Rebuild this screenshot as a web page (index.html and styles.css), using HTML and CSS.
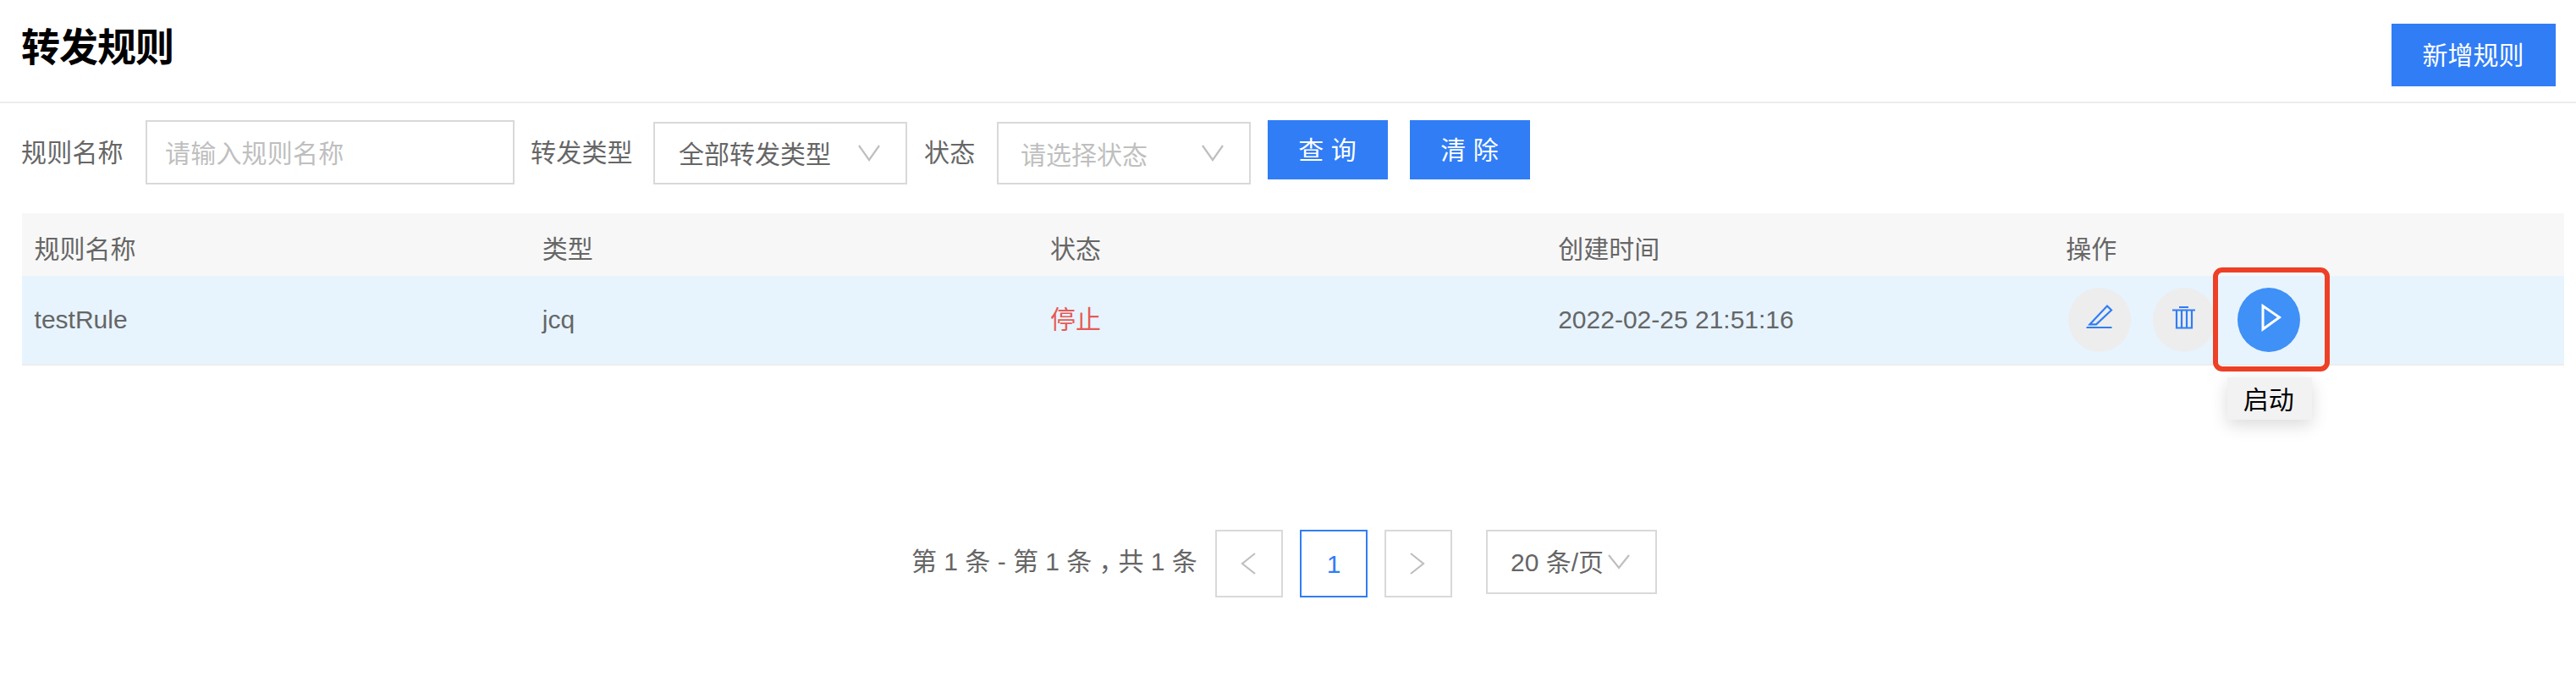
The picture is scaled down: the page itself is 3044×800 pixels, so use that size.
FILE: index.html
```html
<!DOCTYPE html>
<html lang="zh-CN">
<head>
<meta charset="utf-8">
<title>转发规则</title>
<link rel="stylesheet" href="styles.css">
</head>
<body>
<header class="header">
  <h1 class="title">转发规则</h1>
  <button class="btn btn-add"><span>新增规则</span></button>
</header>
<form class="filters">
  <label class="label">规则名称</label>
  <div class="field field-input"><span>请输入规则名称</span></div>
  <label class="label label-type">转发类型</label>
  <div class="field field-select"><span>全部转发类型</span>
    <svg class="chevron" viewBox="0 0 26 20"><path d="M1 1l12 17L25 1"/></svg></div>
  <label class="label label-state">状态</label>
  <div class="field field-select empty"><span>请选择状态</span>
    <svg class="chevron" viewBox="0 0 26 20"><path d="M1 1l12 17L25 1"/></svg></div>
  <button type="button" class="btn btn-query"><span>查 询</span></button>
  <button type="button" class="btn btn-clear"><span>清 除</span></button>
</form>
<main class="table">
  <div class="row head">
    <div>规则名称</div><div>类型</div><div>状态</div><div>创建时间</div><div>操作</div>
  </div>
  <div class="row data">
    <div>testRule</div><div>jcq</div><div class="stopped">停止</div><div>2022-02-25 21:51:16</div>
    <div class="actions">
      <a class="action"><svg viewBox="0 0 74 76"><path d="M21.500 47h30M25.500 43.300L46 21.500l5 5L33 43.300z"/></svg></a>
      <a class="action"><svg viewBox="0 0 74 76"><path d="M31 23h11M23 26.500h27M28 27v20.500h18V27M34 27v20M40 27v20"/></svg></a>
      <a class="action active"><svg viewBox="0 0 74 76"><path d="M30 21.500v27.500l19.500-14z"/></svg>
        <span class="highlight"></span><span class="tooltip">启动</span></a>
    </div>
  </div>
</main>
<nav class="pagination">
  <span class="total">第 1 条 - 第 1 条<span class="comma">，</span>共 1 条</span>
  <a class="page"><svg class="arrow" viewBox="0 0 18 26"><path d="M17 1L2 13l15 12"/></svg></a>
  <a class="page current"><span>1</span></a>
  <a class="page"><svg class="arrow" viewBox="0 0 18 26"><path d="M1 1l15 12L1 25"/></svg></a>
  <div class="size"><span>20 条/页</span><svg class="size-chevron" viewBox="0 0 26 18"><path d="M1 1l12 15L25 1"/></svg></div>
</nav>
</body>
</html>
```
FILE: styles.css
```css
* { box-sizing: border-box; }
body {
  margin: 0;
  background: #fff;
  color: #666;
  font: 30px/44px "Liberation Sans", "Noto Sans CJK SC", sans-serif;
}
svg { fill: none; stroke: #bfbfbf; stroke-width: 2.2; display: block; }
.header {
  display: flex;
  justify-content: space-between;
  align-items: flex-start;
  height: 122px;
  padding: 28px 24px 0 25px;
  border-bottom: 2px solid #ededed;
}
.title {
  margin: 0;
  padding-top: 2px;
  color: #000;
  font-size: 46px;
  line-height: 52px;
  letter-spacing: -1px;
}
.btn {
  display: flex;
  align-items: center;
  justify-content: center;
  width: 142px;
  height: 70px;
  padding: 2px 1px 0 0;
  border: 0;
  background: #307df6;
  color: #fff;
  font: inherit;
}
.btn-add { width: 194px; height: 74px; padding-right: 1px; }
.btn-clear { margin-left: 26px; }
.btn-query { margin-left: 20px; }
.filters { display: flex; height: 130px; padding: 20px 0 0 25px; }
.label { width: 147px; padding-top: 17px; letter-spacing: .2px; }
.label-type { margin-left: 19px; width: 145px; }
.label-state { margin-left: 20px; width: 86px; }
.field {
  display: flex;
  align-items: center;
  border: 2px solid #d9d9d9;
}
.field span { padding-top: 4px; }
.field-input { width: 436px; height: 76px; padding-left: 21px; color: #bfbfbf; letter-spacing: .2px; }
.field-select {
  justify-content: space-between;
  width: 300px;
  height: 74px;
  margin-top: 2px;
  padding: 0 30px 0 28px;
}
.empty { padding-left: 26px; color: #bfbfbf; }
.empty span { padding-top: 6px; }
.chevron { width: 26px; height: 20px; }
.table { width: 3004px; margin-left: 26px; }
.row { display: grid; grid-template-columns: repeat(5, 600.2px); align-items: center; }
.row > div { padding-left: 14.6px; }
.head { height: 74px; padding-top: 11px; background: #f7f7f7; }
.data { height: 106px; background: #e7f4fe; border-bottom: 2px solid #ededed; }
.stopped { color: #e65a55; }
.row > .actions { display: flex; gap: 26px; padding-left: 17px; }
.action { position: relative; width: 74px; height: 76px; border-radius: 50%; background: #ededed; }
.action svg { stroke: #307df6; }
.active { background: #3f90f7; }
.active svg { stroke: #fff; stroke-width: 3; }
.highlight {
  position: absolute;
  left: -29px;
  top: -24px;
  width: 138px;
  height: 123px;
  border: 6px solid #ed4027;
  border-radius: 11px;
}
.tooltip {
  position: absolute;
  left: -12px;
  top: 106px;
  width: 100px;
  height: 50px;
  padding: 2px 2px 0 0;
  background: #f2f2f2;
  box-shadow: 0 6px 20px rgba(0, 0, 0, .15);
  color: #000;
  line-height: 50px;
  text-align: center;
}
.pagination { display: flex; margin: 194px 0 0 1077px; }
.total { width: 359px; padding-top: 16px; white-space: nowrap; }
.comma { padding: 0 8px; font-feature-settings: "halt"; }
.page {
  display: flex;
  align-items: center;
  justify-content: center;
  width: 80px;
  height: 80px;
  margin-right: 20px;
  border: 2px solid #d9d9d9;
}
.current { padding-top: 2px; border-color: #307df6; color: #307df6; }
.arrow { width: 18px; height: 26px; margin-right: 2px; }
.size {
  display: flex;
  align-items: center;
  width: 202px;
  height: 76px;
  margin-left: 20px;
  padding-left: 27px;
  border: 2px solid #d9d9d9;
}
.size span { padding-top: 2px; }
.size-chevron { width: 26px; height: 18px; margin-left: 5px; }
```
